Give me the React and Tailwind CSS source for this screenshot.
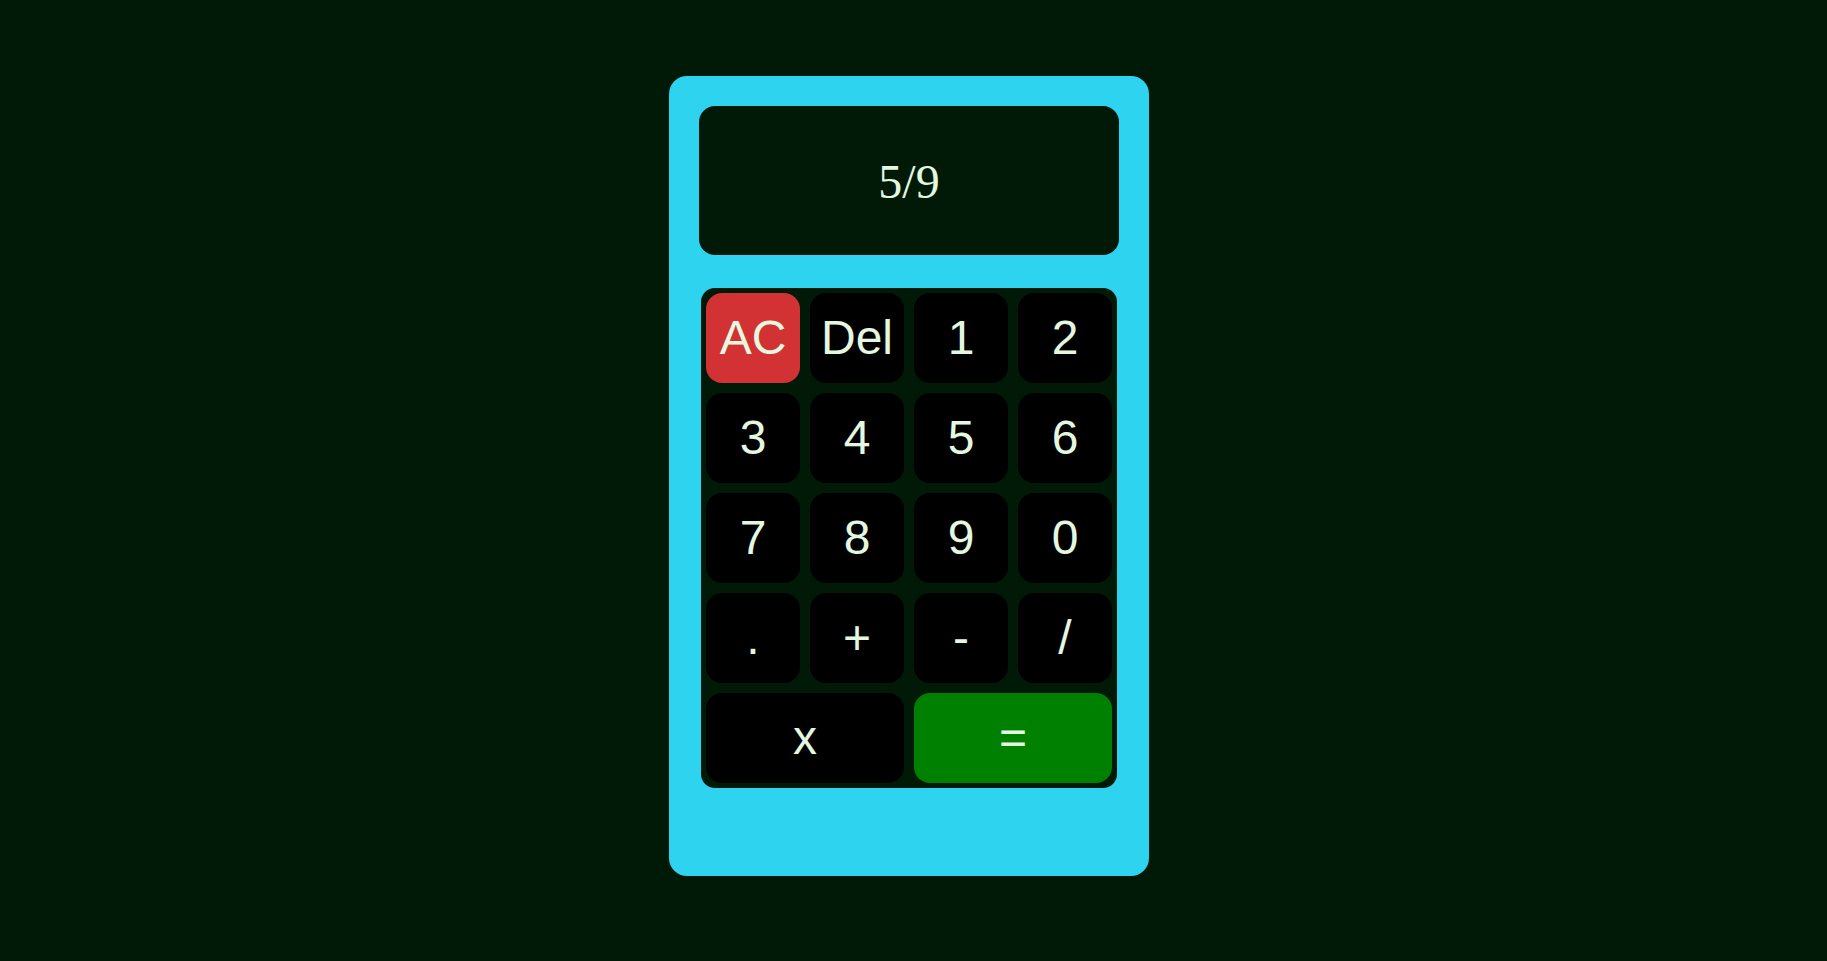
import React from "react";

const keys = [
  { label: "AC", cls: "bg-[#d33234]" },
  { label: "Del" },
  { label: "1" },
  { label: "2" },
  { label: "3" },
  { label: "4" },
  { label: "5" },
  { label: "6" },
  { label: "7" },
  { label: "8" },
  { label: "9" },
  { label: "0" },
  { label: "." },
  { label: "+" },
  { label: "-" },
  { label: "/" },
  { label: "x", wide: true },
  { label: "=", wide: true, cls: "bg-[#008000]" },
];

export default function App() {
  return (
    <div className="min-h-[961px] w-full bg-[#001a07] flex justify-center pt-[76px] pr-[9px]">
      <div className="w-[480px] h-[800px] bg-[#2dd3ef] rounded-[18px] pt-[30px] px-[30px] flex flex-col items-center">
        <div className="w-[420px] h-[149px] bg-[#001a07] rounded-[16px] flex items-center justify-center pt-[3px] text-[#e4f8e0] text-[48px] font-['Liberation_Serif',serif]">
          5/9
        </div>
        <div className="mt-[33px] w-[416px] bg-[#001a07] rounded-[14px] p-[5px] grid grid-cols-4 gap-[10px] font-['Liberation_Sans',Arial,sans-serif]">
          {keys.map((k) => (
            <div
              key={k.label}
              className={`h-[90px] rounded-[16px] flex items-center justify-center text-[48px] text-[#e4f8e0] ${k.wide ? "col-span-2" : ""} ${k.cls ? k.cls : "bg-black"}`}
            >
              {k.label}
            </div>
          ))}
        </div>
      </div>
    </div>
  );
}
